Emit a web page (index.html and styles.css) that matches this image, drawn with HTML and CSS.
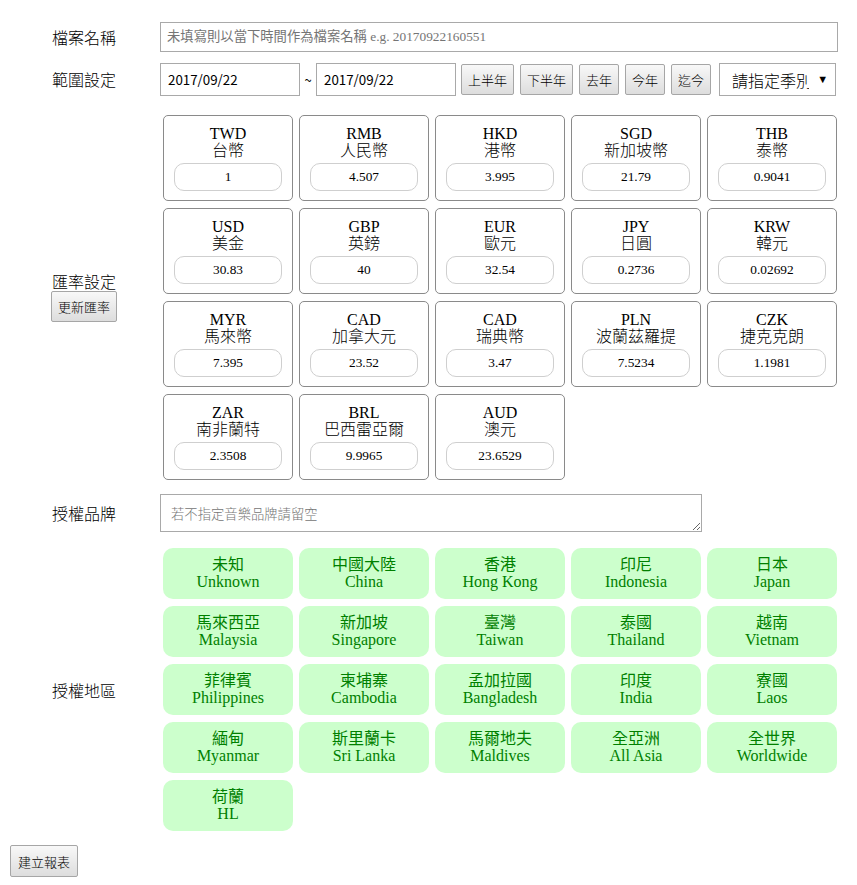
FILE: index.html
```html
<!DOCTYPE html>
<html lang="zh-Hant">
<head>
<meta charset="utf-8">
<title>建立報表</title>
<link rel="stylesheet" href="styles.css">
</head>
<body>
<div class="page">
  <div class="row row-name">
    <div class="label">檔案名稱</div>
    <div class="field">
      <input class="text-input name-input" type="text" placeholder="未填寫則以當下時間作為檔案名稱 e.g. 20170922160551">
    </div>
  </div>

  <div class="row row-range">
    <div class="label">範圍設定</div>
    <div class="field range">
      <input class="text-input date-input" type="text" value="2017/09/22">
      <span class="tilde">~</span>
      <input class="text-input date-input" type="text" value="2017/09/22">
      <div class="btn-group">
        <button class="btn">上半年</button>
        <button class="btn">下半年</button>
        <button class="btn">去年</button>
        <button class="btn">今年</button>
        <button class="btn">迄今</button>
      </div>
      <div class="select-wrap">
        <select class="season">
          <option>請指定季別</option>
        </select>
        <span class="arrow">▼</span>
      </div>
    </div>
  </div>

  <div class="row row-rate">
    <div class="label label-stack">
      <div>匯率設定</div>
      <button class="btn">更新匯率</button>
    </div>
    <div class="field">
      <div class="cards">
        <div class="card"><div class="code">TWD</div><div class="cname">台幣</div><input class="rate" type="text" value="1"></div>
        <div class="card"><div class="code">RMB</div><div class="cname">人民幣</div><input class="rate" type="text" value="4.507"></div>
        <div class="card"><div class="code">HKD</div><div class="cname">港幣</div><input class="rate" type="text" value="3.995"></div>
        <div class="card"><div class="code">SGD</div><div class="cname">新加坡幣</div><input class="rate" type="text" value="21.79"></div>
        <div class="card"><div class="code">THB</div><div class="cname">泰幣</div><input class="rate" type="text" value="0.9041"></div>
        <div class="card"><div class="code">USD</div><div class="cname">美金</div><input class="rate" type="text" value="30.83"></div>
        <div class="card"><div class="code">GBP</div><div class="cname">英鎊</div><input class="rate" type="text" value="40"></div>
        <div class="card"><div class="code">EUR</div><div class="cname">歐元</div><input class="rate" type="text" value="32.54"></div>
        <div class="card"><div class="code">JPY</div><div class="cname">日圓</div><input class="rate" type="text" value="0.2736"></div>
        <div class="card"><div class="code">KRW</div><div class="cname">韓元</div><input class="rate" type="text" value="0.02692"></div>
        <div class="card"><div class="code">MYR</div><div class="cname">馬來幣</div><input class="rate" type="text" value="7.395"></div>
        <div class="card"><div class="code">CAD</div><div class="cname">加拿大元</div><input class="rate" type="text" value="23.52"></div>
        <div class="card"><div class="code">CAD</div><div class="cname">瑞典幣</div><input class="rate" type="text" value="3.47"></div>
        <div class="card"><div class="code">PLN</div><div class="cname">波蘭茲羅提</div><input class="rate" type="text" value="7.5234"></div>
        <div class="card"><div class="code">CZK</div><div class="cname">捷克克朗</div><input class="rate" type="text" value="1.1981"></div>
        <div class="card"><div class="code">ZAR</div><div class="cname">南非蘭特</div><input class="rate" type="text" value="2.3508"></div>
        <div class="card"><div class="code">BRL</div><div class="cname">巴西雷亞爾</div><input class="rate" type="text" value="9.9965"></div>
        <div class="card"><div class="code">AUD</div><div class="cname">澳元</div><input class="rate" type="text" value="23.6529"></div>
      </div>
    </div>
  </div>

  <div class="row row-brand">
    <div class="label">授權品牌</div>
    <div class="field">
      <textarea class="brand" placeholder="若不指定音樂品牌請留空"></textarea>
    </div>
  </div>

  <div class="row row-region">
    <div class="label">授權地區</div>
    <div class="field">
      <div class="regions">
        <div class="region"><div>未知</div><div>Unknown</div></div>
        <div class="region"><div>中國大陸</div><div>China</div></div>
        <div class="region"><div>香港</div><div>Hong Kong</div></div>
        <div class="region"><div>印尼</div><div>Indonesia</div></div>
        <div class="region"><div>日本</div><div>Japan</div></div>
        <div class="region"><div>馬來西亞</div><div>Malaysia</div></div>
        <div class="region"><div>新加坡</div><div>Singapore</div></div>
        <div class="region"><div>臺灣</div><div>Taiwan</div></div>
        <div class="region"><div>泰國</div><div>Thailand</div></div>
        <div class="region"><div>越南</div><div>Vietnam</div></div>
        <div class="region"><div>菲律賓</div><div>Philippines</div></div>
        <div class="region"><div>柬埔寨</div><div>Cambodia</div></div>
        <div class="region"><div>孟加拉國</div><div>Bangladesh</div></div>
        <div class="region"><div>印度</div><div>India</div></div>
        <div class="region"><div>寮國</div><div>Laos</div></div>
        <div class="region"><div>緬甸</div><div>Myanmar</div></div>
        <div class="region"><div>斯里蘭卡</div><div>Sri Lanka</div></div>
        <div class="region"><div>馬爾地夫</div><div>Maldives</div></div>
        <div class="region"><div>全亞洲</div><div>All Asia</div></div>
        <div class="region"><div>全世界</div><div>Worldwide</div></div>
        <div class="region"><div>荷蘭</div><div>HL</div></div>
      </div>
    </div>
  </div>

  <div class="footer">
    <button class="btn btn-create">建立報表</button>
  </div>
</div>
</body>
</html>
```

FILE: styles.css
```css
* { box-sizing: border-box; }

body {
  margin: 8px;
  background: #fff;
  color: #000;
  font-family: "Liberation Serif", "Noto Sans CJK TC", serif;
  font-size: 16px;
}

.page {
  padding-top: 14px;
  display: flex;
  flex-direction: column;
}

.row {
  display: flex;
  align-items: center;
}

.label {
  width: 152px;
  flex: none;
  text-align: center;
  font-family: "Noto Sans CJK TC", sans-serif;
  font-weight: 300;
  font-size: 16px;
  line-height: 20px;
}

.label-stack {
  display: flex;
  flex-direction: column;
  align-items: center;
  gap: 0;
  margin-top: -3px;
}

.field {
  flex: none;
}

.row-range { margin-top: 10px; }
.row-rate { margin-top: 19px; }
.row-brand { margin-top: 14px; }
.row-region { margin-top: 16px; }
.footer { margin-top: 14px; padding-left: 2px; }

.text-input {
  border: 1px solid #a9a9a9;
  background: #fff;
  font-size: 13.333px;
  color: #000;
  outline: none;
  margin: 0;
}

.name-input {
  width: 678px;
  height: 30px;
  padding: 0 6px;
  font-family: "Liberation Serif", "Noto Sans CJK TC", serif;
}

.name-input::placeholder { color: #757575; }

.range {
  display: flex;
  align-items: center;
}

.date-input {
  width: 140px;
  height: 33px;
  padding: 0 7px;
  font-family: "Noto Sans CJK TC", "Liberation Sans", sans-serif;
}

.tilde {
  width: 16px;
  text-align: center;
  font-family: "Noto Sans CJK TC", sans-serif;
  font-size: 13px;
}

.btn-group {
  display: flex;
  gap: 6px;
  margin-left: 5px;
}

.btn {
  height: 31px;
  padding: 0 6px;
  font-family: "Noto Sans CJK TC", sans-serif;
  font-weight: 300;
  font-size: 13px;
  color: #000;
  border: 1px solid #a6a6a6;
  border-radius: 2px;
  background: linear-gradient(#f8f8f8, #dddddd);
  margin: 0;
}

.select-wrap {
  position: relative;
  margin-left: 8px;
  margin-top: 1px;
}

.season {
  appearance: none;
  -webkit-appearance: none;
  width: 117px;
  height: 33px;
  border: 1px solid #a9a9a9;
  border-radius: 0;
  background: #fff;
  padding: 0 26px 0 12px;
  font-family: "Noto Sans CJK TC", sans-serif;
  font-weight: 300;
  font-size: 16px;
  color: #000;
  margin: 0;
  display: block;
}

.arrow {
  position: absolute;
  right: 8px;
  top: 9px;
  font-size: 11px;
  line-height: 14px;
  color: #000;
  pointer-events: none;
}

.cards,
.regions {
  display: grid;
  grid-template-columns: repeat(5, 130px);
  column-gap: 6px;
  row-gap: 7px;
  padding-left: 3px;
}

.card {
  height: 86px;
  border: 1px solid #8a8a8a;
  border-radius: 5px;
  padding: 9px 10px 0;
  text-align: center;
  display: flex;
  flex-direction: column;
  align-items: center;
}

.code,
.cname {
  line-height: 17px;
  font-size: 16px;
}

.cname { font-weight: 300; }

.rate {
  margin-top: 4px;
  width: 108px;
  height: 28px;
  border: 1px solid #cfcfcf;
  border-radius: 10px;
  text-align: center;
  font-family: "Liberation Serif", "Noto Sans CJK TC", serif;
  font-size: 13.333px;
  color: #000;
  outline: none;
  background: #fff;
}

.brand {
  width: 542px;
  height: 38px;
  border: 1px solid #a9a9a9;
  padding: 10px 10px;
  font-family: "Noto Sans CJK TC", sans-serif;
  font-weight: 300;
  font-size: 13.333px;
  line-height: 17px;
  resize: both;
  outline: none;
  margin: 0;
  display: block;
}

.brand::placeholder { color: #757575; }

.region {
  height: 51px;
  border-radius: 10px;
  background: #ccffcc;
  color: #008000;
  text-align: center;
  padding-top: 8px;
  font-size: 16px;
  line-height: 17px;
}

.btn-create {
  height: 32px;
  padding: 0 7px;
}
```
